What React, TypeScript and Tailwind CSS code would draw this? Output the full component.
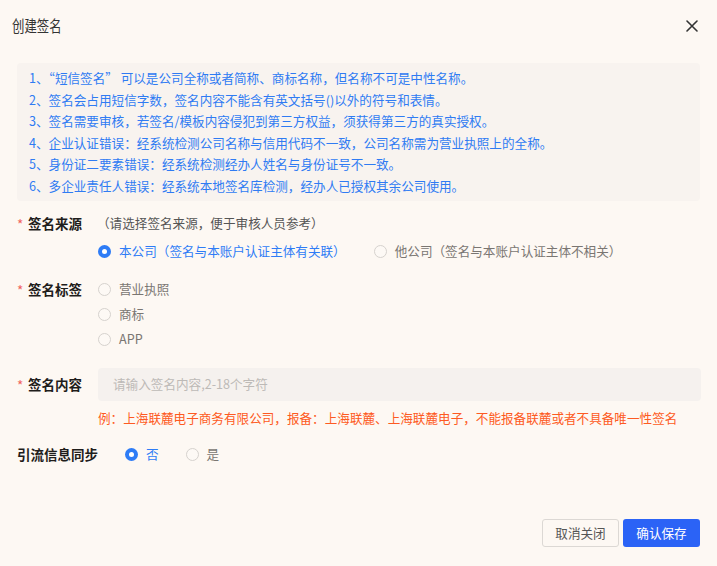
import React from "react";

const FONT = { fontFamily: '"Noto Sans CJK SC", "Noto Sans", sans-serif' };

function Radio({ checked }: { checked?: boolean }) {
  return checked ? (
    <span className="flex h-[13px] w-[13px] shrink-0 items-center justify-center rounded-full bg-[#2e7cf6]">
      <span className="h-[5px] w-[5px] rounded-full bg-white" />
    </span>
  ) : (
    <span className="h-[13px] w-[13px] shrink-0 rounded-full border border-[#d6d2ce] bg-[#fdf9f5]" />
  );
}

function Option({ checked, label }: { checked?: boolean; label: string }) {
  return (
    <div className="flex items-center gap-[8px]">
      <Radio checked={checked} />
      <span className={checked ? "text-[#2e7cf6]" : "text-[#7a7672]"}>{label}</span>
    </div>
  );
}

function Label({ text, star = true }: { text: string; star?: boolean }) {
  return (
    <div className="flex w-[81px] shrink-0 items-center">
      {star && <span className="mr-[4px] w-[7px] pt-[3px] text-[13.5px] leading-none text-[#f0605a]">*</span>}
      <span className="text-[13.5px] font-semibold text-[#1f1d1b]">{text}</span>
    </div>
  );
}

export default function App() {
  const tips = [
    "1、“短信签名” 可以是公司全称或者简称、商标名称，但名称不可是中性名称。",
    "2、签名会占用短信字数，签名内容不能含有英文括号()以外的符号和表情。",
    "3、签名需要审核，若签名/模板内容侵犯到第三方权益，须获得第三方的真实授权。",
    "4、企业认证错误：经系统检测公司名称与信用代码不一致，公司名称需为营业执照上的全称。",
    "5、身份证二要素错误：经系统检测经办人姓名与身份证号不一致。",
    "6、多企业责任人错误：经系统本地签名库检测，经办人已授权其余公司使用。",
  ];
  return (
    <div style={FONT} className="flex h-[566px] w-[717px] flex-col bg-[#fdf8f3] text-[12.6px] text-[#333]">
      {/* header */}
      <div className="flex h-[52px] items-center justify-between pl-[12px] pr-[19px]">
        <span className="inline-block origin-left scale-x-80 text-[15.5px] text-[#333]">创建签名</span>
        <svg width="12" height="12" viewBox="0 0 12 12" className="text-[#333]">
          <path d="M1 1 L11 11 M11 1 L1 11" stroke="currentColor" strokeWidth="1.6" strokeLinecap="round" />
        </svg>
      </div>

      {/* tips */}
      <div className="mx-[17px] mt-[11px] rounded-[4px] bg-[#f8f3ef] py-[4px] pl-[12px] leading-[21.6px] text-[#2f7bf3]">
        {tips.map((t) => (
          <div key={t}>{t}</div>
        ))}
      </div>

      {/* form */}
      <div className="flex flex-col pl-[17px] pr-[16px]">
        <div className="mt-[12px] flex h-[22px] items-center">
          <Label text="签名来源" />
          <span className="-ml-[1px] text-[#555]">（请选择签名来源，便于审核人员参考）</span>
        </div>
        <div className="ml-[81px] mt-[6px] flex h-[22px] items-center gap-[28px]">
          <Option checked label="本公司（签名与本账户认证主体有关联）" />
          <Option label="他公司（签名与本账户认证主体不相关）" />
        </div>

        <div className="mt-[14px] flex">
          <div className="flex h-[25px] items-center">
            <Label text="签名标签" />
          </div>
          <div className="flex flex-col">
            <div className="flex h-[25px] items-center"><Option label="营业执照" /></div>
            <div className="flex h-[25px] items-center"><Option label="商标" /></div>
            <div className="flex h-[25px] items-center"><Option label="APP" /></div>
          </div>
        </div>

        <div className="mt-[16px] flex items-center">
          <Label text="签名内容" />
          <div className="flex h-[33px] flex-1 items-center rounded-[4px] bg-[#f5f1ee] pl-[15px] text-[#bdbab7]">
            请输入签名内容,2-18个字符
          </div>
        </div>
        <div className="ml-[81px] mt-[8px] flex h-[20px] items-center text-[#fd5a22]">
          例：上海联麓电子商务有限公司，报备：上海联麓、上海联麓电子，不能报备联麓或者不具备唯一性签名
        </div>

        <div className="mt-[15px] flex h-[22px] items-center">
          <span className="text-[13.5px] font-semibold text-[#1f1d1b]">引流信息同步</span>
          <div className="ml-[27px] flex items-center gap-[27px]">
            <Option checked label="否" />
            <Option label="是" />
          </div>
        </div>
      </div>

      {/* footer */}
      <div className="mb-[19px] mt-auto flex justify-end gap-[4px] pr-[17px]">
        <button className="h-[28px] w-[77px] rounded-[3px] border border-[#dcd8d4] bg-transparent text-[12.6px] text-[#555]">
          取消关闭
        </button>
        <button className="h-[28px] w-[77px] rounded-[3px] bg-[#2b63f6] text-[12.6px] text-white">
          确认保存
        </button>
      </div>
    </div>
  );
}
